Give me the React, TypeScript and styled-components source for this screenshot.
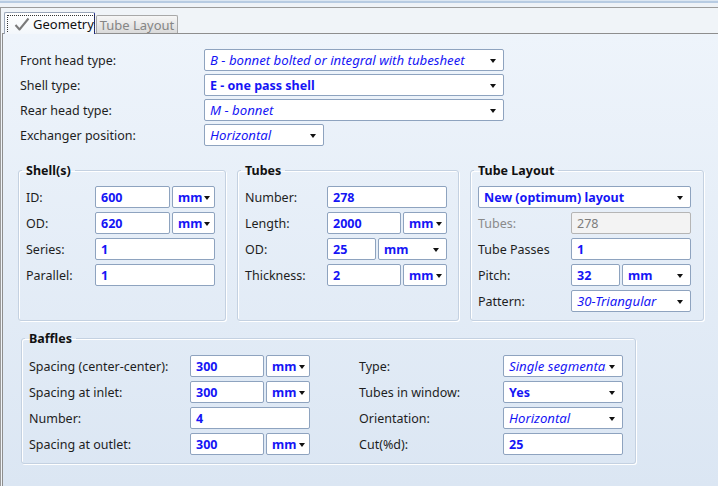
import React from "react";
import styled, { createGlobalStyle, css } from "styled-components";

const GlobalStyle = createGlobalStyle`
    html, body { margin: 0; padding: 0; }
    body {
        width: 718px;
        height: 486px;
        overflow: hidden;
        font-family: "Noto Sans", "Open Sans", sans-serif;
        font-size: 12px;
        color: #1e1e1e;
    }
`;

// outer window frame
const Frame = styled.div`
    width: 718px;
    height: 486px;
    box-sizing: border-box;
    display: flex;
    flex-direction: column;
    background: #f0f4f8;
    border-left: 1px solid #9a9a9a;
`;

const TopStrip = styled.div`
    height: 7px;
    margin-left: -1px;
    border-bottom: 1px solid #9b9b9b;
    background: linear-gradient(#dbe6f2 0, #dbe6f2 1px, #b7cbe2 1px, #b7cbe2 3px, #eef2f7 3px);
`;

// tab header
const TabBar = styled.div`
    height: 25px;
    display: flex;
    align-items: flex-end;
    padding-left: 3px;
    gap: 1px;
    position: relative;
    z-index: 1;
`;

const Tab = styled.div<{ $active?: boolean }>`
    box-sizing: border-box;
    display: flex;
    align-items: center;
    white-space: nowrap;
    font-size: 13px;
    ${p => p.$active ? css`
        width: 91px;
        height: 22px;
        margin-bottom: -1px;
        padding: 2px;
        background: linear-gradient(#ffffff, #f3f7fb);
        border: 1px solid #9aa6b8;
        border-right-color: #1d2a8a;
        border-bottom: none;
        border-radius: 2px 2px 0 0;
        color: #111;
    ` : css`
        width: 82px;
        height: 18px;
        justify-content: center;
        background: linear-gradient(#f6f6f6, #dadada);
        border: 1px solid #a8a8a8;
        border-bottom: none;
        border-radius: 2px 2px 0 0;
        color: #858585;
    `}
`;

const FocusRing = styled.div`
    flex: 1;
    height: 100%;
    box-sizing: border-box;
    display: flex;
    align-items: center;
    gap: 3px;
    padding-left: 6px;
    border: 1px dotted #333;
    border-bottom: none;
`;

const Panel = styled.div`
    flex: 1;
    margin-left: 1px;
    border-top: 1px solid #8e8e8e;
    border-left: 1px solid #8e8e8e;
    background: linear-gradient(#eef4fb, #dbe6f3);
    padding: 15px 0 0 17px;
`;

// form rows
const HeadGrid = styled.div`
    display: grid;
    grid-template-columns: 184px auto;
    grid-auto-rows: 22px;
    row-gap: 3px;
    align-items: center;
`;

const Label = styled.span<{ $muted?: boolean }>`
    white-space: nowrap;
    color: ${p => (p.$muted ? "#8a8a8a" : "#1e1e1e")};
    font-size: 12.5px;
`;

const fieldBox = css`
    box-sizing: border-box;
    height: 22px;
    border: 1px solid #8ea3bf;
    border-radius: 2px;
    background: #fff;
    display: flex;
    align-items: center;
    padding-left: 5px;
    color: #1515f5;
    font-size: 12.5px;
    white-space: nowrap;
    overflow: hidden;
`;

const TextBox = styled.div<{ $w?: number; $disabled?: boolean }>`
    ${fieldBox}
    width: ${p => p.$w ?? 120}px;
    font-weight: 700;
    ${p => p.$disabled && css`
        background: #f3f3f3;
        border-color: #b5b5b5;
        color: #7d7d7d;
        font-weight: 400;
    `}
`;

const Select = styled.div<{ $w?: number; $italic?: boolean; $tight?: boolean }>`
    ${fieldBox}
    position: relative;
    width: ${p => p.$w ?? 120}px;
    padding-right: ${p => (p.$tight ? 12 : 16)}px;
    font-weight: ${p => (p.$italic ? 400 : 700)};
    font-style: ${p => (p.$italic ? "italic" : "normal")};
    font-size: ${p => (p.$italic ? 13.2 : 12.5)}px;
    &::after {
        content: "";
        position: absolute;
        right: ${p => (p.$tight ? 4 : 7)}px;
        top: 9px;
        border-left: 3.5px solid transparent;
        border-right: 3.5px solid transparent;
        border-top: 4px solid #111;
    }
`;

// clips long choices before the arrow
const SelectText = styled.span`
    flex: 1;
    min-width: 0;
    overflow: hidden;
    text-overflow: clip;
`;

const Pair = styled.div`
    display: flex;
    gap: 2px;
`;

// group boxes
const GroupRow = styled.div`
    display: flex;
    gap: 11px;
    margin: 16px 0 0 -2px;
`;

const Group = styled.fieldset<{ $w: number; $h: number }>`
    box-sizing: border-box;
    width: ${p => p.$w}px;
    height: ${p => p.$h}px;
    margin: 0;
    padding: 7px 7px 0 7px;
    border: 1px solid #c4d1e1;
    border-radius: 3px;
    box-shadow: inset 1px 1px 0 #fff, 1px 1px 0 #fff;
    min-width: 0;
`;

const Legend = styled.legend`
    padding: 0 4px;
    margin-left: -4px;
    font-weight: 700;
    font-size: 12.5px;
    line-height: 17px;
    color: #111;
`;

const FormGrid = styled.div<{ $label: number }>`
    display: grid;
    grid-template-columns: ${p => p.$label}px auto;
    grid-auto-rows: 22px;
    row-gap: 4px;
    align-items: center;
`;

const Wide = styled.div`
    grid-column: 1 / -1;
`;

const BaffleGroup = styled(Group)`
    margin: 9px 0 0 1px;
    padding-top: 8px;
`;

const BaffleColumns = styled.div`
    display: flex;
    gap: 49px;
`;

const CheckIcon = () => (
    <svg width="16" height="14" viewBox="0 0 16 14">
        <path d="M1.5 8 L5.5 12.5 L14.5 1.5" fill="none" stroke="#7a7a7a" strokeWidth="2" strokeLinejoin="round" />
    </svg>
);

type DropProps = { w?: number; italic?: boolean; tight?: boolean; children: React.ReactNode };

const Dropdown = ({ w, italic, tight, children }: DropProps) => (
    <Select $w={w} $italic={italic} $tight={tight}>
        <SelectText>{children}</SelectText>
    </Select>
);

const UnitPair = ({ value, lead, unit }: { value: string; lead: number; unit: number }) => (
    <Pair>
        <TextBox $w={lead}>{value}</TextBox>
        <Dropdown w={unit} tight={unit < 50}>mm</Dropdown>
    </Pair>
);

const App = () => {
    return (
        <>
            <GlobalStyle />
            <Frame>
                <TopStrip />
                <TabBar>
                    <Tab $active>
                        <FocusRing>
                            <CheckIcon />
                            Geometry
                        </FocusRing>
                    </Tab>
                    <Tab>Tube Layout</Tab>
                </TabBar>
                <Panel>
                    <HeadGrid>
                        <Label>Front head type:</Label>
                        <Dropdown w={300} italic>B - bonnet bolted or integral with tubesheet</Dropdown>
                        <Label>Shell type:</Label>
                        <Dropdown w={300}>E - one pass shell</Dropdown>
                        <Label>Rear head type:</Label>
                        <Dropdown w={300} italic>M - bonnet</Dropdown>
                        <Label>Exchanger position:</Label>
                        <Dropdown w={120} italic>Horizontal</Dropdown>
                    </HeadGrid>

                    <GroupRow>
                        <Group $w={208} $h={159}>
                            <Legend>Shell(s)</Legend>
                            <FormGrid $label={69}>
                                <Label>ID:</Label>
                                <UnitPair value="600" lead={75} unit={43} />
                                <Label>OD:</Label>
                                <UnitPair value="620" lead={75} unit={43} />
                                <Label>Series:</Label>
                                <TextBox>1</TextBox>
                                <Label>Parallel:</Label>
                                <TextBox>1</TextBox>
                            </FormGrid>
                        </Group>

                        <Group $w={222} $h={159}>
                            <Legend>Tubes</Legend>
                            <FormGrid $label={82}>
                                <Label>Number:</Label>
                                <TextBox>278</TextBox>
                                <Label>Length:</Label>
                                <UnitPair value="2000" lead={74} unit={44} />
                                <Label>OD:</Label>
                                <UnitPair value="25" lead={49} unit={69} />
                                <Label>Thickness:</Label>
                                <UnitPair value="2" lead={74} unit={44} />
                            </FormGrid>
                        </Group>

                        <Group $w={234} $h={159}>
                            <Legend>Tube Layout</Legend>
                            <FormGrid $label={93}>
                                <Wide>
                                    <Dropdown w={213}>New (optimum) layout</Dropdown>
                                </Wide>
                                <Label $muted>Tubes:</Label>
                                <TextBox $disabled>278</TextBox>
                                <Label>Tube Passes</Label>
                                <TextBox>1</TextBox>
                                <Label>Pitch:</Label>
                                <UnitPair value="32" lead={49} unit={69} />
                                <Label>Pattern:</Label>
                                <Dropdown italic>30-Triangular</Dropdown>
                            </FormGrid>
                        </Group>
                    </GroupRow>

                    <BaffleGroup $w={615} $h={134}>
                        <Legend>Baffles</Legend>
                        <BaffleColumns>
                            <FormGrid $label={161}>
                                <Label>Spacing (center-center):</Label>
                                <UnitPair value="300" lead={74} unit={44} />
                                <Label>Spacing at inlet:</Label>
                                <UnitPair value="300" lead={74} unit={44} />
                                <Label>Number:</Label>
                                <TextBox>4</TextBox>
                                <Label>Spacing at outlet:</Label>
                                <UnitPair value="300" lead={74} unit={44} />
                            </FormGrid>
                            <FormGrid $label={144}>
                                <Label>Type:</Label>
                                <Dropdown italic>Single segmental</Dropdown>
                                <Label>Tubes in window:</Label>
                                <Dropdown>Yes</Dropdown>
                                <Label>Orientation:</Label>
                                <Dropdown italic>Horizontal</Dropdown>
                                <Label>Cut(%d):</Label>
                                <TextBox>25</TextBox>
                            </FormGrid>
                        </BaffleColumns>
                    </BaffleGroup>
                </Panel>
            </Frame>
        </>
    );
};

export default App;
